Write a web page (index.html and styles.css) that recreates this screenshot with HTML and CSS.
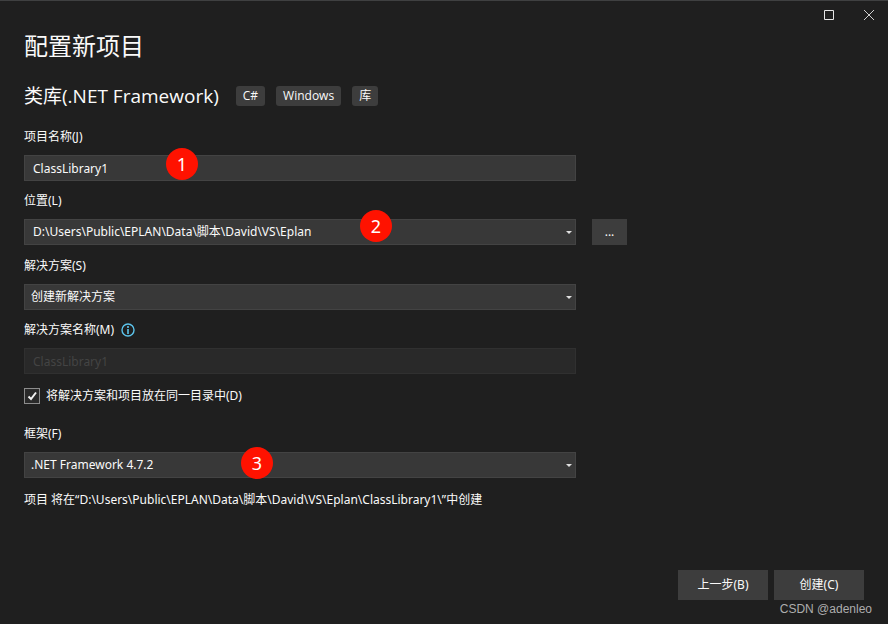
FILE: index.html
```html
<!DOCTYPE html>
<html lang="zh-CN">
<head>
<meta charset="utf-8">
<meta name="viewport" content="width=device-width, initial-scale=1">
<title>配置新项目</title>
<link rel="stylesheet" href="styles.css">
</head>
<body>
<header class="titlebar">
  <button class="window-button" type="button" aria-label="最大化">
    <svg width="12" height="12" viewBox="0 0 12 12"><path d="M1.500 1.500H10.500V10.500H1.500Z" fill="none" stroke="#e6e6e6"/></svg>
  </button>
  <button class="window-button" type="button" aria-label="关闭">
    <svg width="12" height="12" viewBox="0 0 12 12"><path d="M1 1L11 11M11 1L1 11" fill="none" stroke="#d0d0d0"/></svg>
  </button>
</header>
<main class="page">
  <h1 class="title">配置新项目</h1>
  <div class="template">
    <h2 class="template-name">类库(.NET Framework)</h2>
    <ul class="tags">
      <li class="tag">C#</li>
      <li class="tag">Windows</li>
      <li class="tag">库</li>
    </ul>
  </div>
  <form class="form">
    <div class="field">
      <label class="label" for="project">项目名称(J)</label>
      <div class="control">
        <input class="box" id="project" type="text" value="ClassLibrary1">
        <span class="badge badge-name">1</span>
      </div>
    </div>
    <div class="field">
      <label class="label" for="location">位置(L)</label>
      <div class="control">
        <select class="box box-location" id="location"><option>D:\Users\Public\EPLAN\Data\脚本\David\VS\Eplan</option></select>
        <svg class="arrow" width="6" height="3" viewBox="0 0 6 3"><path d="M0 0H6L3 3Z" fill="#e0e0e0"/></svg>
        <span class="badge badge-location">2</span>
      </div>
      <button class="browse" type="button">...</button>
    </div>
    <div class="field field-solution">
      <label class="label" for="solution">解决方案(S)</label>
      <div class="control">
        <select class="box" id="solution"><option>创建新解决方案</option></select>
        <svg class="arrow" width="6" height="3" viewBox="0 0 6 3"><path d="M0 0H6L3 3Z" fill="#e0e0e0"/></svg>
      </div>
    </div>
    <div class="field">
      <label class="label" for="solution-name">解决方案名称(M)
        <svg class="info" width="14" height="14" viewBox="0 0 14 14"><circle cx="7" cy="7" r="6" fill="none" stroke="#5cc4ec" stroke-width="1.400"/><path d="M7 6V11M7 3V5" stroke="#5cc4ec" stroke-width="1.600"/></svg>
      </label>
      <div class="control">
        <input class="box" id="solution-name" type="text" value="ClassLibrary1" disabled>
      </div>
    </div>
    <label class="check">
      <input class="checkbox" type="checkbox" checked>
      <svg class="tick" width="16" height="16" viewBox="0 0 16 16"><path d="M4.500 8.500L7 11L12 4.500" fill="none" stroke="#f1f1f1" stroke-width="2"/></svg>
      <span>将解决方案和项目放在同一目录中(D)</span>
    </label>
    <div class="field">
      <label class="label" for="framework">框架(F)</label>
      <div class="control">
        <select class="box" id="framework"><option>.NET Framework 4.7.2</option></select>
        <svg class="arrow" width="6" height="3" viewBox="0 0 6 3"><path d="M0 0H6L3 3Z" fill="#e0e0e0"/></svg>
        <span class="badge badge-framework">3</span>
      </div>
    </div>
    <p class="note">项目 将在“D:\Users\Public\EPLAN\Data\脚本\David\VS\Eplan\ClassLibrary1\”中创建</p>
  </form>
</main>
<footer class="footer">
  <div class="actions">
    <button class="action" type="button">上一步(B)</button>
    <button class="action" type="button">创建(C)</button>
  </div>
  <div class="credit">CSDN @adenleo</div>
</footer>
</body>
</html>
```
FILE: styles.css
```css
* {
  box-sizing: border-box;
}

body {
  display: flex;
  flex-direction: column;
  min-height: 100vh;
  margin: 0;
  border-top: 1px solid #3f4041;
  background: #1f1f1f;
  color: #fafafa;
  font: 12px/20px "Noto Sans", "Noto Sans CJK SC", sans-serif;
}

button,
input,
select {
  margin: 0;
  color: inherit;
  font: inherit;
}

.titlebar {
  display: flex;
  justify-content: flex-end;
}

.window-button {
  display: grid;
  place-items: center;
  width: 42px;
  height: 28px;
  padding: 0;
  border: 0;
  background: none;
}

.window-button:last-child {
  width: 38px;
}

.page {
  flex: 1;
  padding: 0 24px;
}

.title {
  margin: 0;
  font-size: 24px;
  font-weight: 400;
  line-height: 34px;
}

.template {
  display: flex;
  align-items: center;
  gap: 17px;
  margin: 18px 0 16px;
}

.template-name {
  margin: 0;
  font-family: "Open Sans", "Noto Sans CJK SC", sans-serif;
  font-size: 19px;
  font-weight: 400;
  line-height: 30px;
}

.tags {
  display: flex;
  gap: 11px;
  margin: 0;
  padding: 0;
  list-style: none;
  font-family: "Open Sans", "Noto Sans CJK SC", sans-serif;
}

.tag {
  padding: 0 7px;
  border-radius: 3px;
  background: #3d3d3d;
}

.field {
  display: grid;
  grid-template-columns: minmax(0, 552px) 35px;
  gap: 8px 16px;
  margin-bottom: 10px;
}

.field-solution {
  margin-top: 11px;
}

.label {
  display: flex;
  grid-column: 1 / -1;
  align-items: center;
  gap: 7px;
}

.control {
  position: relative;
}

.box {
  appearance: none;
  display: block;
  width: 100%;
  height: 26px;
  padding: 0 8px;
  border: 1px solid #434343;
  border-radius: 0;
  outline: 0;
  background: #383838;
}

select.box {
  padding: 0 6px;
}

select.box-location {
  padding: 0 8px;
}

.box:disabled {
  border-color: #303030;
  background: #292929;
  color: #444;
  opacity: 1;
}

.arrow {
  position: absolute;
  top: 12px;
  right: 4px;
  pointer-events: none;
}

.badge {
  position: absolute;
  width: 32px;
  height: 32px;
  border-radius: 50%;
  background: #ff1200;
  color: #fff;
  font-size: 18px;
  line-height: 32px;
  text-align: center;
}

.badge-name {
  top: -7px;
  left: 142px;
}

.badge-location {
  top: -9px;
  left: 336px;
}

.badge-framework {
  top: -5px;
  left: 217px;
}

.browse,
.action {
  padding: 0;
  border: 0;
  background: #3d3d3d;
}

.check {
  position: relative;
  display: flex;
  align-items: center;
  gap: 6px;
  width: fit-content;
  margin: 12px 0 18px;
}

.checkbox {
  appearance: none;
  width: 16px;
  height: 16px;
  border: 1px solid #8c8c8c;
  background: #292929;
}

.tick {
  position: absolute;
  top: 2px;
  left: 0;
  visibility: hidden;
}

.checkbox:checked + .tick {
  visibility: visible;
}

.note {
  margin: 12px 0;
}

.footer {
  padding: 0 16px 6px 24px;
}

.actions {
  display: flex;
  justify-content: flex-end;
  gap: 6px;
  padding-right: 8px;
}

.action {
  width: 90px;
  height: 30px;
}

.credit {
  color: #adadad;
  font-family: "Liberation Sans", sans-serif;
  line-height: 18px;
  text-align: right;
}
```
